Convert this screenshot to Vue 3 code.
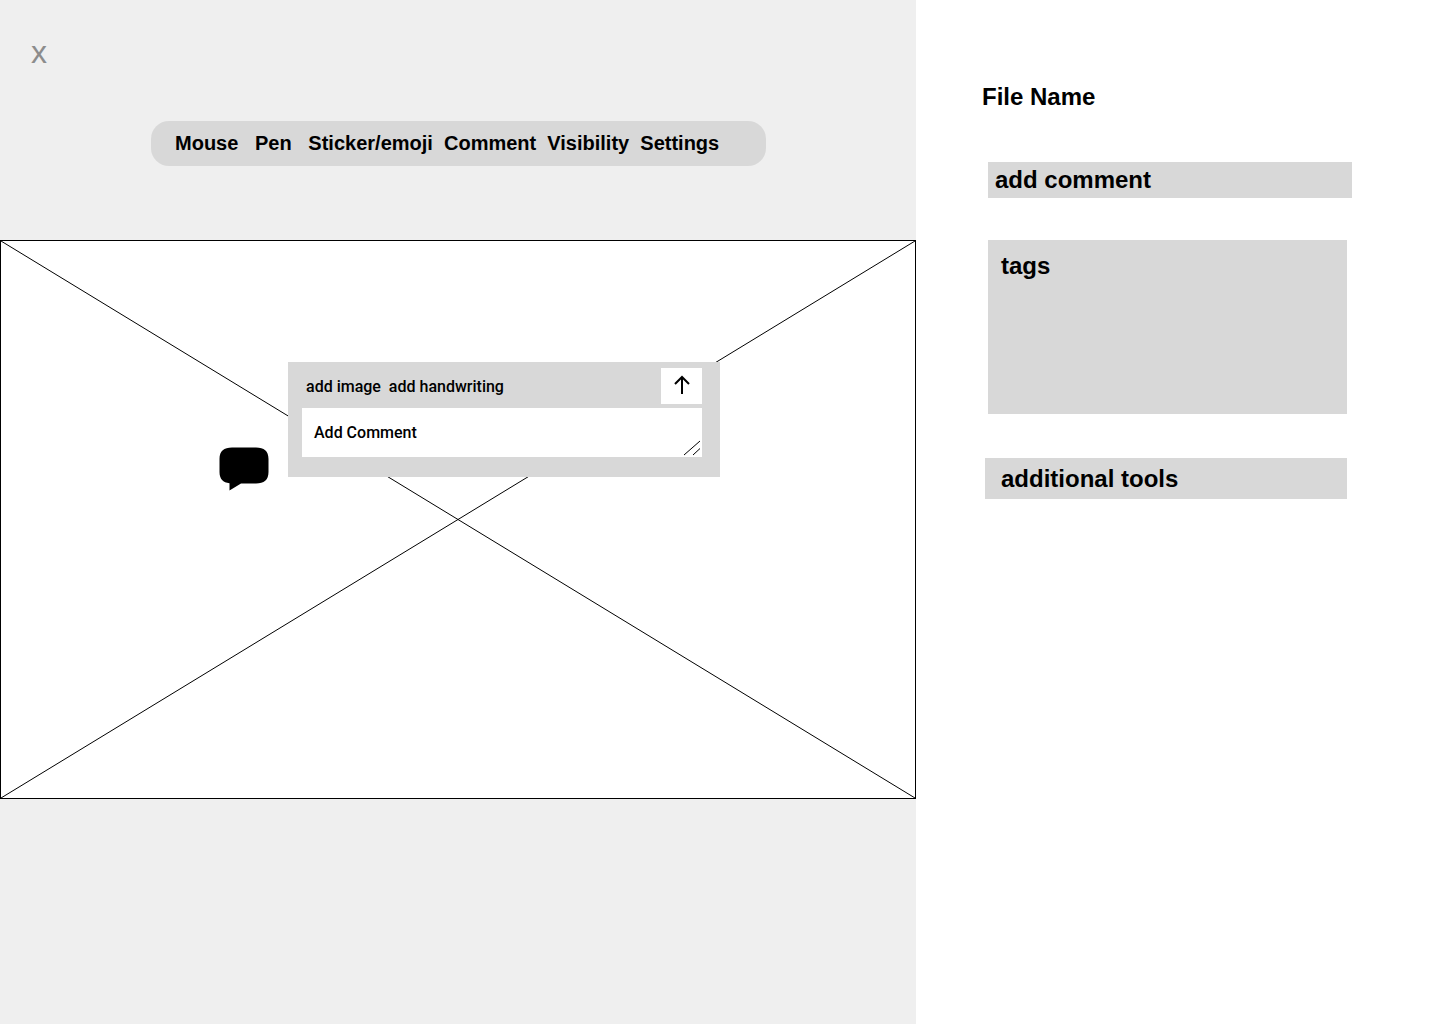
<template>
  <div class="page">
    <main class="stage">
      <div class="close">x</div>
      <div class="toolbar">{{ toolText }}</div>

      <div class="canvas">
        <svg class="cross" viewBox="0 0 100 100" preserveAspectRatio="none">
          <line x1="0" y1="0" x2="100" y2="100" vector-effect="non-scaling-stroke" />
          <line x1="100" y1="0" x2="0" y2="100" vector-effect="non-scaling-stroke" />
        </svg>

        <svg class="bubble" width="50" height="44" viewBox="0 0 50 44">
          <path d="M13 0.5H37C45 0.5 49.5 4 49.5 12V25C49.5 33 45 36.5 37 36.5H22L10.5 43.5V36.3C4 35.5 0.5 32 0.5 25V12C0.5 4 5 0.5 13 0.5Z" />
        </svg>

        <div class="popup">
          <div class="popup-top">
            <span class="popup-actions">{{ actionText }}</span>
            <button class="send">
              <svg width="18" height="20" viewBox="0 0 18 20">
                <path d="M9 19V2M2 9L9 2L16 9" />
              </svg>
            </button>
          </div>
          <div class="field">
            <span>Add Comment</span>
            <svg class="grip" width="18" height="16" viewBox="0 0 18 16">
              <path d="M1 15L17 1M10 15L17 8.500" />
            </svg>
          </div>
        </div>
      </div>
    </main>

    <aside class="side">
      <h1 class="file-name">File Name</h1>
      <div class="panel panel-comment">add comment</div>
      <div class="panel panel-tags">tags</div>
      <div class="panel panel-tools">additional tools</div>
    </aside>
  </div>
</template>

<script setup>
const toolText = 'Mouse   Pen   Sticker/emoji  Comment  Visibility  Settings'
const actionText = 'add image  add handwriting'
</script>

<style>
html,
body {
  margin: 0;
  background: #fff;
}
</style>

<style scoped>
.page {
  display: flex;
  width: 1440px;
  height: 1024px;
  overflow: hidden;
  font-family: "Liberation Sans", Arial, sans-serif;
  color: #000;
}

.stage {
  display: flex;
  flex-direction: column;
  flex: none;
  width: 916px;
  height: 1024px;
  background: #efefef;
}

.close {
  height: 36px;
  margin: 34px 0 0 31px;
  font-size: 32px;
  line-height: 36px;
  color: #8c8c8c;
}

.toolbar {
  box-sizing: border-box;
  width: 615px;
  height: 45px;
  margin: 51px 0 0 151px;
  padding-left: 24px;
  border-radius: 18px;
  background: #d8d8d8;
  font-size: 20px;
  font-weight: 700;
  line-height: 45px;
  white-space: pre;
}

.canvas {
  position: relative;
  box-sizing: border-box;
  width: 916px;
  height: 559px;
  margin-top: 74px;
  border: 1px solid #000;
  background: #fff;
}

.cross {
  position: absolute;
  inset: 0;
  width: 100%;
  height: 100%;
}

.cross line {
  stroke: #000;
  stroke-width: 1;
}

.bubble {
  position: absolute;
  left: 218px;
  top: 206px;
}

.popup {
  position: absolute;
  left: 287px;
  top: 121px;
  box-sizing: border-box;
  width: 432px;
  height: 115px;
  padding: 6px 18px 0 14px;
  background: #d8d8d8;
  font-family: Roboto, sans-serif;
  font-size: 16px;
  font-weight: 500;
}

.popup-top {
  display: flex;
  align-items: center;
  justify-content: space-between;
  height: 36px;
  margin-bottom: 4px;
}

.popup-actions {
  padding-left: 4px;
  white-space: pre;
}

.send {
  display: flex;
  align-items: center;
  justify-content: center;
  width: 41px;
  height: 36px;
  padding: 0;
  border: none;
  background: #fff;
}

.send svg {
  margin-top: -2px;
}

.send path {
  fill: none;
  stroke: #000;
  stroke-width: 2;
}

.field {
  position: relative;
  display: flex;
  align-items: center;
  height: 49px;
  padding-left: 12px;
  background: #fff;
}

.grip {
  position: absolute;
  right: 1px;
  bottom: 1px;
}

.grip path {
  fill: none;
  stroke: #000;
  stroke-width: 1;
}

.side {
  flex: 1;
  display: flex;
  flex-direction: column;
  align-items: flex-start;
  padding: 83px 0 0 66px;
}

.file-name {
  margin: 0;
  font-size: 24px;
  font-weight: 700;
  line-height: 28px;
}

.panel {
  box-sizing: border-box;
  background: #d8d8d8;
  font-size: 24px;
  font-weight: 700;
}

.panel-comment {
  width: 364px;
  height: 36px;
  margin: 51px 0 0 6px;
  padding-left: 7px;
  line-height: 36px;
}

.panel-tags {
  width: 359px;
  height: 174px;
  margin: 42px 0 0 6px;
  padding: 12px 0 0 13px;
  line-height: 28px;
}

.panel-tools {
  width: 362px;
  height: 41px;
  margin: 44px 0 0 3px;
  padding-left: 16px;
  line-height: 41px;
}
</style>
